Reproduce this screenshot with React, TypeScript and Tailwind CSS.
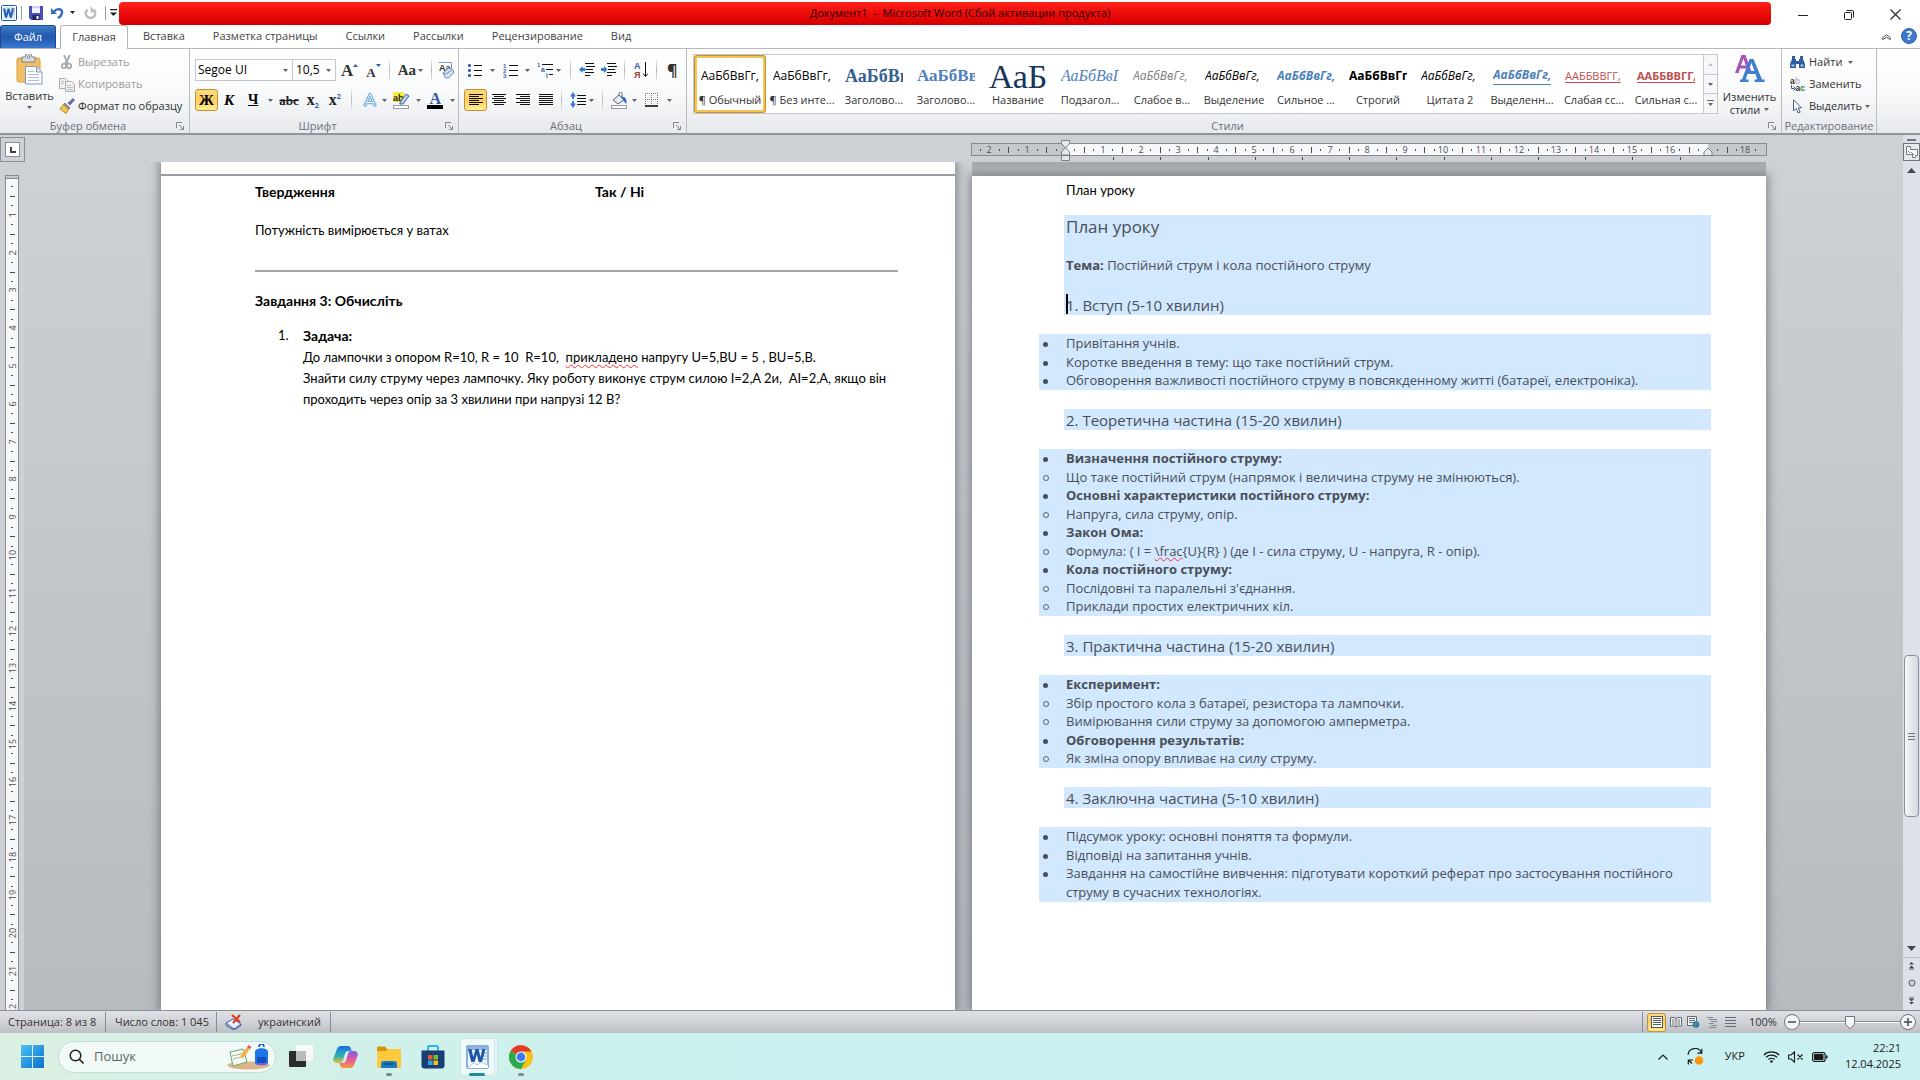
import React from "react";

const UI = "font-['Open_Sans','Noto_Sans',sans-serif]";

type P = { children?: React.ReactNode; className?: string };

function Svg({ w, h, children, vb }: { w: number; h: number; vb?: string; children: React.ReactNode }) {
  return (
    <svg width={w} height={h} viewBox={vb ?? `0 0 ${w} ${h}`} className="block shrink-0" aria-hidden="true">
      {children}
    </svg>
  );
}

const Arrow = ({ fill = "#5f6368" }: { fill?: string }) => (
  <Svg w={5} h={3}>
    <path d="M0 0h5L2.500 3z" fill={fill} />
  </Svg>
);

const WordIcon = ({ size = 16 }: { size?: number }) => (
  <Svg w={size} h={size} vb="0 0 16 16">
    <rect x="0.500" y="0.500" width="15" height="15" rx="1" fill="#fff" stroke="#1f58a8" />
    <rect x="2" y="2" width="12" height="12" fill="#dce9f8" />
    <path d="M10 3h4v1.200h-4zM10.500 6h3.500v1h-3.500zM11 8.500h3v1h-3z" fill="#9dbce4" />
    <path d="M2 3.500h2.200l1 5.300 1.400-5.300h1.900l1.300 5.300 1.100-5.300h2.100l-2.200 9.300H8.900L7.500 7.600 6 12.800H4z" fill="#1f5fb4" />
  </Svg>
);

/* Word 2010 window icon as shown on the taskbar: large W with a page curl */
const WordTile = () => (
  <Svg w={23} h={24}>
    <path d="M1 1h21v22H1z" fill="#f2f7fd" stroke="#2b66b5" />
    <path d="M2 2h20v3H2z" fill="#8db4e4" />
    <path d="M17 8h4M17 11h4M17 14h4" stroke="#7fa7d8" />
    <path d="M2 4h3.500l1.800 8 2.200-8h3l2 8 1.800-8h3.200l-3.500 13h-3.300l-1.900-7.500L8.500 17H5.200z" fill="#1d57a8" />
    <path d="M1 23l7-5 3 2 5-3 6 3v3z" fill="#fff" />
    <path d="M2 22l6-4 3 2 5-3 5 3" fill="none" stroke="#a9c3e6" />
  </Svg>
);

/* ---------- title bar ---------- */
function TitleBar() {
  return (
    <header className="flex h-[25px] shrink-0 items-center bg-white">
      <div className="flex w-[119px] shrink-0 items-center pl-px">
        <WordIcon />
        <span className="ml-1 h-3.5 w-px bg-[#9a9da1]" />
        <button aria-label="Сохранить" className="ml-[7px]">
          <Svg w={14} h={14}>
            <path d="M0 0h14v14H2L0 12z" fill="#4b4fb8" />
            <path d="M3 0h8v7H3z" fill="#eef1fb" />
            <path d="M3 0h8v2H3z" fill="#c8d2f2" />
            <path d="M3.500 9h7v5h-7z" fill="#23265e" />
            <path d="M7.500 10h2v3h-2z" fill="#fff" />
          </Svg>
        </button>
        <button aria-label="Отменить" className="ml-2 flex items-center gap-1.5">
          <Svg w={13} h={13}>
            <path d="M3 5.500C6 2 11.500 2.500 11 6.500c-.2 2.500-2 4.500-4 5.500" fill="none" stroke="#3568bf" strokeWidth="2.400" />
            <path d="M0 2v6h6z" fill="#3568bf" />
          </Svg>
          <Arrow fill="#222" />
        </button>
        <button aria-label="Повторить" className="ml-[9px]">
          <Svg w={13} h={14}>
            <path d="M3.500 3.500A4.800 4.800 0 1 0 9.500 3.500" fill="none" stroke="#bbbec2" strokeWidth="2.400" />
            <path d="M6.500 0v6.500h5z" fill="#bbbec2" />
          </Svg>
        </button>
        <span className="ml-2 h-3.5 w-px bg-[#9a9da1]" />
        <button aria-label="Настройка панели быстрого доступа" className="ml-1">
          <Svg w={7} h={7}>
            <path d="M0 0h7v1.200H0zM0 3.500h7L3.500 7z" fill="#222" />
          </Svg>
        </button>
      </div>
      <div className="mt-px flex h-[23px] flex-1 items-center justify-center rounded-sm bg-linear-to-b from-[#ff2018] via-[#ec0c0a] to-[#d60000] pl-[30px] text-[11px] text-[#2a0000]">
        <h1 className="whitespace-pre">Документ1  -  Microsoft Word (Сбой активации продукта)</h1>
      </div>
      <div className="ml-[9px] flex shrink-0 self-stretch pr-0.5 text-[#222]">
        <button aria-label="Свернуть" className="flex w-[46px] items-center justify-center pt-1">
          <Svg w={10} h={10}><path d="M0 5.500h10" stroke="currentColor" /></Svg>
        </button>
        <button aria-label="Восстановить" className="flex w-[46px] items-center justify-center pt-1">
          <Svg w={10} h={10}>
            <rect x="0.500" y="2.500" width="7" height="7" rx="1" fill="none" stroke="currentColor" />
            <path d="M2.500.5H8A1.500 1.500 0 0 1 9.500 2v5.500" fill="none" stroke="currentColor" />
          </Svg>
        </button>
        <button aria-label="Закрыть" className="flex w-[46px] items-center justify-center pt-1">
          <Svg w={11} h={11}><path d="M.5.5l10 10M10.500.5l-10 10" stroke="currentColor" strokeWidth="1.100" /></Svg>
        </button>
      </div>
    </header>
  );
}

/* ---------- tabs ---------- */
const TABS = ["Вставка", "Разметка страницы", "Ссылки", "Рассылки", "Рецензирование", "Вид"];

function Tabs() {
  return (
    <nav className="flex h-6 shrink-0 items-end border-b border-[#b4b8bd] bg-white text-[11px] text-[#444]">
      <button className="flex h-[23px] w-14 items-center justify-center rounded-t-[3px] border border-b-0 border-[#1d4a94] bg-linear-to-b from-[#3f7cc9] via-[#1f57ab] to-[#3a78d0] text-white">
        Файл
      </button>
      <button className="ml-1 -mb-px flex h-6 w-[68px] items-center justify-center rounded-t-[3px] border border-b-0 border-[#b4b8bd] bg-white">
        Главная
      </button>
      <div className="flex flex-1 pl-px">
        {TABS.map((t) => (
          <button key={t} className="flex h-[23px] items-center px-[14px]">{t}</button>
        ))}
      </div>
      <button aria-label="Свернуть ленту" className="mr-2.5 mb-[7px]">
        <Svg w={9} h={7}>
          <path d="M.7 3.500L4.500.7l3.800 2.800v2.200L4.500 3.200.7 5.700z" fill="#fff" stroke="#555" strokeWidth="1" />
        </Svg>
      </button>
      <button aria-label="Справка" className="mr-[3px] mb-1 flex size-4 items-center justify-center rounded-full border border-[#2b5fb0] bg-[#3f79cc] text-[12px] leading-none font-bold text-white">
        ?
      </button>
    </nav>
  );
}

/* ---------- ribbon ---------- */
function Group({ label, className = "", launcher = true, children }: { label: string; className?: string; launcher?: boolean; children: React.ReactNode }) {
  return (
    <section aria-label={label} className={`flex flex-col border-r border-[#b9bdc3] ${className}`}>
      <div className="min-h-0 flex-1">{children}</div>
      <div className="flex h-[15px] shrink-0 items-center text-[11px] leading-none text-[#6b6f7b]">
        <span className="flex-1 text-center whitespace-nowrap">{label}</span>
        {launcher && (
          <button aria-label={`${label}: параметры`} className="mr-[5px]">
            <Svg w={8} h={8}>
              <path d="M.5 6V.5H6M3 3l4 4M7.500 4v3.500H4" fill="none" stroke="#85898f" />
            </Svg>
          </button>
        )}
      </div>
    </section>
  );
}

const Sep = () => <span className="block h-5 w-px shrink-0 bg-linear-to-b from-[#e4e6e9] via-[#b5b9be] to-[#e4e6e9]" />;

function Tool({ label, children, drop, className = "" }: { label: string; children: React.ReactNode; drop?: boolean; className?: string }) {
  return (
    <button aria-label={label} className={`flex h-[22px] shrink-0 items-center gap-1 ${className}`}>
      {children}
      {drop && <Arrow />}
    </button>
  );
}

const ON = "justify-center rounded-[3px] border border-[#c2903c] bg-linear-to-b from-[#fddb7d] via-[#fccf5c] to-[#fdee90]";

const Lines = ({ rows }: { rows: [number, number][] }) => (
  <Svg w={14} h={12}>
    {rows.map(([x, w], i) => (
      <rect key={i} x={x} y={i * 2} width={w} height="1" fill="#111" />
    ))}
  </Svg>
);

function Clipboard() {
  return (
    <Group label="Буфер обмена" className="w-[190px] shrink-0">
      <div className="flex">
        <button className="flex w-[59px] shrink-0 flex-col items-center pt-[5px] text-[11px] leading-4 text-[#333]">
          <Svg w={27} h={31}>
            <rect x="1" y="4" width="23" height="24" rx="2" fill="#f0bf62" stroke="#d29a3a" />
            <path d="M6 3h3a3.500 3.500 0 0 1 7 0h3v5H6z" fill="#d9dde2" stroke="#7d838b" />
            <circle cx="12.500" cy="3" r="1.300" fill="#fff" stroke="#7d838b" />
            <path d="M9.500 12.500h11l5.500 5.500v12h-16.500z" fill="#fdfeff" stroke="#8597ba" />
            <path d="M20.500 12.500V18H26" fill="#dbe6f6" stroke="#8597ba" />
            <path d="M12 17.500h6M12 20.500h11M12 23.500h11M12 26.500h11" stroke="#a9bcdd" />
          </Svg>
          <span className="mt-[3px]">Вставить</span>
          <span className="mt-0.5"><Arrow /></span>
        </button>
        <div className="flex flex-col pt-0.5 text-[11px] whitespace-nowrap text-[#333]">
          <button className="flex h-[22px] items-center gap-[3px] text-[#9b9b9b]" disabled>
            <Svg w={16} h={16}>
              <path d="M5 1l4 9M11 1L6 10" stroke="#9ea1a5" strokeWidth="1.600" fill="none" />
              <circle cx="5" cy="12" r="2.200" fill="none" stroke="#9ea1a5" strokeWidth="1.600" />
              <circle cx="10" cy="12" r="2.200" fill="none" stroke="#9ea1a5" strokeWidth="1.600" />
            </Svg>
            Вырезать
          </button>
          <button className="flex h-[22px] items-center gap-[3px] text-[#9b9b9b]" disabled>
            <Svg w={16} h={16}>
              <path d="M.5 2.500h6l3 3v7h-9z" fill="#f2f2f3" stroke="#a9abae" />
              <path d="M6.500 5.500h6l3 3v7h-9z" fill="#f2f2f3" stroke="#a9abae" />
              <path d="M2 5.500h3M2 7.500h3M8 9.500h4M8 11.500h6M8 13.500h6" stroke="#b9bbbe" />
            </Svg>
            Копировать
          </button>
          <button className="flex h-[22px] items-center gap-[3px]">
            <Svg w={16} h={16}>
              <path d="M9 5l5-4.500 1.500 1.500L11 7z" fill="#6c6fb4" stroke="#45488a" strokeWidth=".6" />
              <path d="M6 5l5 5-1.500 1.500-5-5z" fill="#8f93a0" stroke="#5c606c" strokeWidth=".6" />
              <path d="M4.500 6.500l5 5L7 15.500 1 11z" fill="#f2c84e" stroke="#a37b1d" strokeWidth=".8" />
            </Svg>
            Формат по образцу
          </button>
        </div>
      </div>
    </Group>
  );
}

const SERIF = "font-['Liberation_Serif',serif]";

function FontGroup() {
  return (
    <Group label="Шрифт" className="w-[269px] shrink-0">
      <div className="flex h-[33px] items-center pt-[9px] pl-[5px]">
        <label className="relative flex h-[22px] w-[98px] shrink-0 items-center border border-[#c3c6ca] bg-white">
          <input aria-label="Шрифт" defaultValue="Segoe UI" className="w-full bg-transparent pl-0.5 text-[12px] text-black outline-none" />
          <span className="absolute right-1"><Arrow /></span>
        </label>
        <label className="relative -ml-px flex h-[22px] w-11 shrink-0 items-center border border-[#c3c6ca] bg-white">
          <input aria-label="Размер шрифта" defaultValue="10,5" className="w-full bg-transparent pl-[3px] text-[12px] text-black outline-none" />
          <span className="absolute right-1"><Arrow /></span>
        </label>
        <Tool label="Увеличить размер" className="ml-[5px]">
          <span className={`${SERIF} text-[17px] leading-none font-bold text-[#333]`}>A</span>
          <span className="-ml-1 mb-2.5"><Svg w={5} h={3}><path d="M0 3h5L2.500 0z" fill="#2c5aa8" /></Svg></span>
        </Tool>
        <Tool label="Уменьшить размер" className="ml-2">
          <span className={`${SERIF} mt-1 text-[13px] leading-none font-bold text-[#333]`}>A</span>
          <span className="-ml-1 mb-2.5"><Arrow fill="#2c5aa8" /></span>
        </Tool>
        <span className="ml-2"><Sep /></span>
        <Tool label="Регистр" drop className="ml-2 !gap-0.5">
          <span className={`${SERIF} text-[15px] leading-none font-bold text-[#333]`}>Aa</span>
        </Tool>
        <span className="ml-2"><Sep /></span>
        <Tool label="Очистить формат" className="ml-1.5">
          <Svg w={16} h={17}>
            <text x="1" y="9" fontSize="9" fontWeight="700" fontFamily="Liberation Sans" fill="#333">Aa</text>
            <path d="M.5.500h13v7" fill="none" stroke="#7f9cc9" />
            <path d="M5 11l5-4.500h3.500L15.500 9v2L10.500 16H7.500z" fill="#d7e3f5" stroke="#6d8abb" />
            <path d="M5 11l3 1 6.500-4.500" fill="none" stroke="#6d8abb" />
          </Svg>
        </Tool>
      </div>
      <div className="flex h-[29px] items-center pt-[7px] pl-[5px]">
        <Tool label="Полужирный" className={`w-[23px] ${ON}`}>
          <span className={`${SERIF} text-[15px] leading-none font-bold text-black`}>Ж</span>
        </Tool>
        <Tool label="Курсив" className="ml-0.5 w-[18px] justify-center">
          <span className={`${SERIF} text-[15px] leading-none font-bold text-black italic`}>К</span>
        </Tool>
        <Tool label="Подчеркнутый" drop className="ml-1.5 !gap-2.5 pl-1">
          <span className={`${SERIF} text-[14px] leading-none font-bold text-black underline`}>Ч</span>
        </Tool>
        <Tool label="Зачеркнутый" className="ml-1.5">
          <span className={`${SERIF} text-[13px] leading-none font-bold text-[#222] line-through`}>abc</span>
        </Tool>
        <Tool label="Подстрочный" className="ml-2 !gap-0">
          <span className={`${SERIF} text-[16px] leading-none font-bold text-[#222]`}>x</span>
          <span className="mt-2.5 text-[7px] leading-none font-bold text-[#2c5aa8]">2</span>
        </Tool>
        <Tool label="Надстрочный" className="ml-2.5 !gap-0">
          <span className={`${SERIF} text-[16px] leading-none font-bold text-[#222]`}>x</span>
          <span className="mb-2 text-[7px] leading-none font-bold text-[#2c5aa8]">2</span>
        </Tool>
        <span className="ml-2.5"><Sep /></span>
        <Tool label="Текстовые эффекты" drop className="ml-2.5">
          <Svg w={16} h={17}>
            <path d="M2.500 14.500L8 2.500l5.500 12M4.500 10.500h7" fill="none" stroke="#b5d9f6" strokeWidth="4" strokeLinejoin="round" />
            <path d="M2.500 14.500L8 2.500l5.500 12M4.500 10.500h7" fill="none" stroke="#4f93d2" strokeWidth="2.200" strokeLinejoin="round" />
            <path d="M2.500 14.500L8 2.500l5.500 12M4.500 10.500h7" fill="none" stroke="#fff" strokeWidth="1" />
          </Svg>
        </Tool>
        <Tool label="Цвет выделения" drop className="ml-1.5 !gap-1.5">
          <Svg w={17} h={17}>
            <rect x="0" y="0" width="11" height="10" fill="#f2ee3a" />
            <text x="0" y="8.500" fontSize="9" fontWeight="700" fontFamily="Liberation Sans" fill="#222">ab</text>
            <path d="M7 10l6-8 3 2-6 8H7z" fill="#b9cdec" stroke="#41609a" />
            <rect x="0.500" y="13.500" width="15" height="3" fill="#fff" stroke="#999da3" />
          </Svg>
        </Tool>
        <Tool label="Цвет текста" drop className="ml-1.5 !gap-1.5">
          <Svg w={17} h={17}>
            <text x="2.500" y="11.500" fontSize="16" fontWeight="700" fontFamily="Liberation Serif" fill="#33569e">A</text>
            <rect x="0" y="13" width="16" height="4" fill="#000" />
          </Svg>
        </Tool>
      </div>
    </Group>
  );
}

function Paragraph() {
  const rows = [0, 1, 2];
  return (
    <Group label="Абзац" className="w-[228px] shrink-0">
      <div className="flex h-[33px] items-center pt-[9px] pl-[9px]">
        <Tool label="Маркеры" drop className="!gap-[7px]">
          <Svg w={15} h={14}>
            {rows.map((r) => <g key={r}><rect x="0" y={r * 5 + 1} width="3" height="3" rx="1" fill="#3d62ae" /><rect x="6" y={r * 5 + 2} width="8" height="1" fill="#111" /></g>)}
          </Svg>
        </Tool>
        <Tool label="Нумерация" drop className="ml-2 !gap-[7px]">
          <Svg w={15} h={15}>
            {rows.map((r) => <g key={r}><text x="0" y={r * 5 + 5} fontSize="6" fontWeight="700" fontFamily="Liberation Sans" fill="#3d62ae">{r + 1}</text><rect x="6" y={r * 5 + 2} width="9" height="1" fill="#111" /></g>)}
          </Svg>
        </Tool>
        <Tool label="Многоуровневый список" drop className="ml-[7px] !gap-0.5">
          <Svg w={17} h={16}>
            <text x="0" y="5" fontSize="6" fontWeight="700" fontFamily="Liberation Sans" fill="#3d62ae">1</text>
            <text x="4" y="10" fontSize="7" fontWeight="700" fontFamily="Liberation Sans" fill="#3d62ae">a</text>
            <text x="9" y="16" fontSize="7" fontWeight="700" fontFamily="Liberation Sans" fill="#3d62ae">i</text>
            <path d="M5 2.500h11M9 7.500h7M12 12.500h4" stroke="#111" />
          </Svg>
        </Tool>
        <span className="ml-[9px]"><Sep /></span>
        {["Уменьшить отступ", "Увеличить отступ"].map((l, i) => (
          <Tool key={l} label={l} className={i ? "ml-1.5" : "ml-2"}>
            <Svg w={16} h={14}>
              <path d="M6 .5h9M7 3.500h9M7 6.500h7M6 9.500h9M6 12.500h5" stroke="#111" />
              <path d={i ? "M0 5h3V3l3.500 3.500L3 10V8H0z" : "M6.500 5h-3V3L0 6.500 3.500 10V8h3z"} fill="#3d7ad0" />
            </Svg>
          </Tool>
        ))}
        <span className="ml-[7px]"><Sep /></span>
        <Tool label="Сортировка" className="ml-[9px]">
          <Svg w={14} h={16}>
            <text x="0" y="7" fontSize="9" fontWeight="700" fontFamily="Liberation Sans" fill="#33569e">А</text>
            <text x="0" y="15.500" fontSize="9" fontWeight="700" fontFamily="Liberation Sans" fill="#a23b3b">Я</text>
            <path d="M11.500 0v14M9 11.500l2.500 3 2.500-3" stroke="#111" fill="none" />
          </Svg>
        </Tool>
        <span className="ml-2"><Sep /></span>
        <Tool label="Отобразить все знаки" className="ml-2.5">
          <span className="text-[16px] leading-none font-bold text-[#333]">¶</span>
        </Tool>
      </div>
      <div className="flex h-[29px] items-center pt-[7px] pl-[5px]">
        <Tool label="По левому краю" className={`w-[23px] ${ON}`}>
          <Lines rows={[[0, 14], [0, 10], [0, 14], [0, 10], [0, 14], [0, 10]]} />
        </Tool>
        <Tool label="По центру" className="ml-[5px]"><Lines rows={[[0, 14], [2, 10], [0, 14], [2, 10], [0, 14], [2, 10]]} /></Tool>
        <Tool label="По правому краю" className="ml-2.5"><Lines rows={[[0, 14], [4, 10], [0, 14], [4, 10], [0, 14], [4, 10]]} /></Tool>
        <Tool label="По ширине" className="ml-[9px]"><Lines rows={[[0, 14], [0, 14], [0, 14], [0, 14], [0, 14], [0, 14]]} /></Tool>
        <span className="ml-2"><Sep /></span>
        <Tool label="Интервал" drop className="ml-2 !gap-[3px]">
          <Svg w={16} h={16}>
            <path d="M3 0l3 4.500H4v2.500H2V4.500H0zM3 16l3-4.500H4V9H2v2.500H0z" fill="#3d7ad0" />
            <path d="M7 3.500h9M7 6.500h9M7 9.500h9M7 12.500h9" stroke="#111" />
          </Svg>
        </Tool>
        <span className="ml-2"><Sep /></span>
        <Tool label="Заливка" drop className="ml-2 !gap-1">
          <Svg w={17} h={17}>
            <path d="M2 8l6-5 5 5-6 4z" fill="#e8ecf2" stroke="#5d6470" />
            <path d="M8 3V1.500a1.500 1.500 0 0 1 3 0V6" fill="none" stroke="#5d6470" />
            <path d="M10 5c4-1 6 2 5.500 6.500C13 11 14 9 12 8z" fill="#2f6fc6" />
            <rect x="0.500" y="13.500" width="15" height="3" fill="#fff" stroke="#999da3" />
          </Svg>
        </Tool>
        <Tool label="Границы" drop className="ml-2 !gap-2">
          <Svg w={14} h={14}>
            <path d="M.5 0v13M6.500 0v13M12.500 0v13M0 .5h13M0 6.500h13" stroke="#777b82" strokeDasharray="1 1" fill="none" />
            <path d="M0 13h13" stroke="#111" strokeWidth="1.600" />
          </Svg>
        </Tool>
      </div>
    </Group>
  );
}

const STYLES: [string, string][] = [
  ["¶ Обычный", "text-[12px] text-black"],
  ["¶ Без инте...", "text-[12px] text-black"],
  ["Заголово...", "font-['Liberation_Serif',serif] text-[18px] font-bold text-[#365f91]"],
  ["Заголово...", "font-['Liberation_Serif',serif] text-[17px] font-bold text-[#4f81bd]"],
  ["Название", "font-['Liberation_Serif',serif] text-[34px] text-[#17365d]"],
  ["Подзагол...", "font-['Liberation_Serif',serif] text-[16px] italic text-[#4f81bd]"],
  ["Слабое в...", "text-[12px] italic text-[#808080]"],
  ["Выделение", "text-[12px] italic text-black"],
  ["Сильное ...", "text-[12px] font-bold italic text-[#4f81bd]"],
  ["Строгий", "text-[12px] font-bold text-black"],
  ["Цитата 2", "text-[12px] italic text-black"],
  ["Выделенн...", "text-[12px] font-bold italic text-[#4f81bd] border-b border-[#4f81bd]"],
  ["Слабая сс...", "text-[11px] text-[#c0504d] underline underline-offset-2"],
  ["Сильная с...", "text-[11px] font-bold text-[#c0504d] underline underline-offset-2"],
];

function StylesGroup() {
  return (
    <Group label="Стили" className="min-w-0 flex-1">
      <div className="flex h-full items-start pt-[5px] pl-1.5">
        <div className="flex h-[60px] min-w-0 flex-1 border border-[#c5c8cc] bg-white">
          <div className="flex min-w-0 flex-1 overflow-hidden">
            {STYLES.map(([name, cls], i) => {
              const sample = i === 4 ? "АаБ" : i >= 12 ? "ААББВВГГ," : "АаБбВвГг,";
              return (
                <button key={i} className={`flex w-[72px] shrink-0 flex-col items-center px-1 pt-px ${i === 0 ? "rounded-[3px] border-[3px] border-[#f3c653] !px-px !pt-0 !pb-0 outline outline-[#c2903c] -outline-offset-1" : "py-[3px]"}`}>
                  <span className={`flex h-[35px] w-[58px] overflow-hidden whitespace-nowrap ${i === 0 ? "-mt-0.5" : ""} items-end ${i === 4 ? "justify-center pb-[5px]" : "pb-1.5"}`}>
                    <span className={`block leading-[18px] ${cls}`}>{sample}</span>
                  </span>
                  <span className="text-[11px] leading-[17px] whitespace-nowrap text-[#333]">{name}</span>
                </button>
              );
            })}
          </div>
          <div className="flex w-3.5 shrink-0 flex-col border-l border-[#c5c8cc] bg-[#f6f7f8]">
            <button aria-label="Вверх" className="flex flex-1 items-center justify-center">
              <Svg w={5} h={3}><path d="M0 3h5L2.500 0z" fill="#b9bcc0" /></Svg>
            </button>
            <button aria-label="Вниз" className="flex flex-1 items-center justify-center border-y border-[#c5c8cc]"><Arrow /></button>
            <button aria-label="Дополнительные параметры" className="flex flex-1 items-center justify-center">
              <Svg w={7} h={7}><path d="M0 0h7v1H0zM1 3h5L3.500 6z" fill="#5f6368" /></Svg>
            </button>
          </div>
        </div>
        <button className="flex w-[63px] shrink-0 flex-col items-center text-[11px] leading-[13px] text-[#333]">
          <Svg w={30} h={30}>
            <path d="M0 19l6.500-18h4L17 19h-4l-1.300-4.500H5L3.700 19zM6 11.500h4.800L8.400 4.500z" fill="#a855b5" />
            <path d="M5 28v-2.500h2L14.500 5h4L27 25.500h2.500V28h-10v-2.500h2.700L20.500 20h-8l-1.800 5.500h2.800V28zM13.500 17h6L16.400 9z" fill="#3f7fd0" />
          </Svg>
          <span className="mt-1.5">Изменить</span>
          <span className="flex items-center gap-1">стили <Arrow /></span>
        </button>
      </div>
    </Group>
  );
}

function Editing() {
  return (
    <Group label="Редактирование" launcher={false} className="w-[95px] shrink-0">
      <div className="flex flex-col pt-0.5 pl-2 text-[11px] text-[#333]">
        <button className="flex h-[22px] items-center gap-1">
          <Svg w={15} h={14}>
            <path d="M2 1h3v3h1v2h3V4h1V1h3v3l2 5v4h-6V9H6v4H0V9l2-5z" fill="#2f5c9e" />
            <path d="M1.500 9.500h3v2h-3zM10.500 9.500h3v2h-3z" fill="#a9c6ea" />
          </Svg>
          <span className="mr-0.5">Найти</span> <Arrow />
        </button>
        <button className="flex h-[22px] items-center gap-[3px]">
          <Svg w={16} h={15}>
            <text x="0" y="6.500" fontSize="8.500" fontWeight="700" fontFamily="Liberation Sans" fill="#333">a<tspan fill="#bbb">b</tspan></text>
            <text x="5.500" y="14" fontSize="8.500" fontWeight="700" fontFamily="Liberation Sans" fill="#333">a<tspan fill="#1f8a2f">c</tspan></text>
            <path d="M1.500 8v3.500h3M3.500 9.500l2 2-2 2" fill="none" stroke="#33569e" />
          </Svg>
          Заменить
        </button>
        <button className="flex h-[22px] items-center gap-[7px] pl-[3px]">
          <Svg w={9} h={15}>
            <path d="M.5.800v11l2.700-2.400 1.900 4.600 2-.9-1.900-4.300H8.500z" fill="#fff" stroke="#4a5f8c" />
          </Svg>
          <span className="-mr-1">Выделить</span> <Arrow />
        </button>
      </div>
    </Group>
  );
}

/* ---------- rulers ---------- */
const CM = 37.8;

function HRuler() {
  const zero = 94;
  const marks: React.ReactNode[] = [];
  for (let q = -9; q <= 74; q++) {
    const x = Math.round(zero + (q * CM) / 4);
    if (q === 0 || q === 68 || x > 792) continue;
    if (q % 4 === 0) {
      marks.push(<text key={q} x={x} y="10" textAnchor="middle" fontSize="9" fontFamily="Open Sans" fill="#4a4d52">{Math.abs(q / 4)}</text>);
    } else if (q % 2 === 0) {
      marks.push(<rect key={q} x={x} y="4" width="1" height="6" fill="#4a4d52" />);
    } else {
      marks.push(<rect key={q} x={x} y="6" width="1" height="2" fill="#4a4d52" />);
    }
  }
  return (
    <svg width="796" height="22" viewBox="0 -3 796 22" className="-ml-px block overflow-visible" aria-label="Горизонтальная линейка">
      <rect x="0.500" y="0.500" width="795" height="12" fill="#c5c9cd" stroke="#868a91" />
      <rect x="95" y="1" width="642" height="11" fill="#f7f8f9" />
      {marks}
      {Array.from({ length: 13 }, (_, i) => (
        <rect key={i} x={Math.round(95 + (i + 1) * 47.2)} y="14" width="1" height="3" fill="#4a4d52" />
      ))}
      <g fill="#e8e9eb" stroke="#7d8187">
        <path d="M90.500-2.500h8v3l-4 4.500-4-4.500z" />
        <path d="M94.500 4.500l4 4.500v3h-8v-3zM90.500 12.500h8v5h-8z" />
        <path d="M737 5l4 4v3.500h-8V9z" />
      </g>
    </svg>
  );
}

function VRuler() {
  const marks: React.ReactNode[] = [];
  for (let q = 1; q <= 96; q++) {
    const y = Math.round(2 + (q * CM) / 4);
    if (q % 4 === 0) {
      marks.push(
        <text key={q} transform={`translate(10.500 ${y}) rotate(-90)`} textAnchor="middle" fontSize="9" fontFamily="Open Sans" fill="#4a4d52">{q / 4}</text>
      );
    } else if (q % 2 === 0) {
      marks.push(<rect key={q} x="5" y={y} width="5" height="1" fill="#4a4d52" />);
    } else {
      marks.push(<rect key={q} x="6" y={y} width="2" height="1" fill="#4a4d52" />);
    }
  }
  return (
    <div className="h-full w-6 shrink-0 overflow-hidden bg-[#cdd1d6] pt-[13px] pl-[5px]">
      <svg width="14" height="960" className="block" aria-label="Вертикальная линейка">
        <rect x="0.500" y="0.500" width="13" height="970" fill="#f7f8f9" stroke="#868a91" />
        <path d="M1 1h12v2H1z" fill="#c5c9cd" />
        <path d="M0 3.500h14" stroke="#868a91" />
        {marks}
      </svg>
    </div>
  );
}

/* ---------- document ---------- */
const BODY = "font-['Lato','Open_Sans',sans-serif]";

function LeftPage() {
  return (
    <article className="flex w-[794px] shrink-0 flex-col bg-white shadow-[0_0_9px_2px_rgba(80,86,94,0.6)]">
      <div className="h-3 shrink-0 bg-white" />
      <div className="h-0.5 shrink-0 bg-[#9a9ea6]" />
      <div className={`${BODY} pr-[57px] pl-[94px] text-[13px] text-black`}>
        <table className="mt-1.5 w-full table-fixed text-left leading-5">
          <thead>
            <tr>
              <th scope="col" className="w-[340px] text-[14px] font-bold">Твердження</th>
              <th scope="col" className="text-[14px] font-bold">Так / Ні</th>
            </tr>
          </thead>
          <tbody>
            <tr><td colSpan={2} className="pt-[18px]">Потужність вимірюється у ватах</td></tr>
          </tbody>
        </table>
        <hr className="mt-[30px] border-t-2 border-[#a5a5a5]" />
        <h2 className="mt-[19px] text-[14px] leading-5 font-bold">Завдання 3: Обчисліть</h2>
        <ol className="mt-3.5">
          <li className="flex leading-[21px]">
            <span className="w-12 shrink-0 pl-[23px]">1.</span>
            <p>
              <b className="text-[14px]">Задача:</b><br />
              До лампочки з опором R=10, R = 10&nbsp; R=10,&nbsp;{" "}
              <span className="underline decoration-red-500 decoration-wavy decoration-1 underline-offset-2">прикладено</span>{" "}
              напругу U=5,BU = 5 , BU=5,B.<br />
              Знайти силу струму через лампочку. Яку роботу виконує струм силою I=2,A 2и,&nbsp; AI=2,A, якщо він проходить через опір за 3 хвилини при напрузі 12 В?
            </p>
          </li>
        </ol>
      </div>
    </article>
  );
}

const SEL = "bg-[#d1e8ff] text-[#4a4f57]";

type Item = { t: React.ReactNode; kind?: "b" | "o" };

function SelList({ items }: { items: Item[] }) {
  return (
    <ul className={`${SEL} -ml-[25px] pl-[25px]`}>
      {items.map(({ t, kind }, i) => (
        <li key={i} className={`relative pl-0.5 ${i % 2 ? "leading-[18px]" : "leading-[19px]"} ${kind === "b" ? "font-bold" : ""}`}>
          {kind === "o" ? (
            <span className="absolute top-[7px] -left-[21px] size-[6px] rounded-full border border-[#5c6168]" />
          ) : (
            <span className="absolute top-[8px] -left-[21px] size-[5px] rounded-full bg-[#4a4f57]" />
          )}
          {t}
        </li>
      ))}
    </ul>
  );
}

const SelHeading = ({ children }: P) => <h3 className={`${SEL} pt-px pl-0.5 text-[15px] leading-5`}>{children}</h3>;

function RightPage() {
  return (
    <div className="flex w-[794px] shrink-0 flex-col">
      <div className="h-3.5 shrink-0 bg-linear-to-b from-[#a4a8ad] to-[#b6b9be]" />
      <article className={`flex-1 bg-white pt-1 pr-[55px] pl-[92px] shadow-[0_0_9px_2px_rgba(80,86,94,0.6)] ${UI} text-[13px]`}>
        <p className={`${BODY} pl-0.5 leading-5 text-black`}>План уроку</p>
        <div className="mt-[15px] flex flex-col gap-[19px]">
          <div className={`${SEL} pl-0.5`}>
            <h2 className="text-[17px] leading-6">План уроку</h2>
            <p className="mt-[17px] leading-[19px]"><b>Тема:</b> Постійний струм і кола постійного струму</p>
            <h3 className="relative mt-[19px] pt-px text-[15px] leading-5">
              <span className="absolute top-0 left-0 h-5 w-0.5 bg-black" />1. Вступ (5-10 хвилин)
            </h3>
          </div>
          <SelList items={[
            { t: "Привітання учнів." },
            { t: "Коротке введення в тему: що таке постійний струм." },
            { t: "Обговорення важливості постійного струму в повсякденному житті (батареї, електроніка)." },
          ]} />
          <SelHeading>2. Теоретична частина (15-20 хвилин)</SelHeading>
          <SelList items={[
            { t: "Визначення постійного струму:", kind: "b" },
            { t: "Що таке постійний струм (напрямок і величина струму не змінюються).", kind: "o" },
            { t: "Основні характеристики постійного струму:", kind: "b" },
            { t: "Напруга, сила струму, опір.", kind: "o" },
            { t: "Закон Ома:", kind: "b" },
            { t: <>Формула: ( I = <span className="underline decoration-red-500 decoration-wavy decoration-1 underline-offset-1">\frac</span>{"{U}{R}"} ) (де I - сила струму, U - напруга, R - опір).</>, kind: "o" },
            { t: "Кола постійного струму:", kind: "b" },
            { t: "Послідовні та паралельні з'єднання.", kind: "o" },
            { t: "Приклади простих електричних кіл.", kind: "o" },
          ]} />
          <SelHeading>3. Практична частина (15-20 хвилин)</SelHeading>
          <SelList items={[
            { t: "Експеримент:", kind: "b" },
            { t: "Збір простого кола з батареї, резистора та лампочки.", kind: "o" },
            { t: "Вимірювання сили струму за допомогою амперметра.", kind: "o" },
            { t: "Обговорення результатів:", kind: "b" },
            { t: "Як зміна опору впливає на силу струму.", kind: "o" },
          ]} />
          <SelHeading>4. Заключна частина (5-10 хвилин)</SelHeading>
          <SelList items={[
            { t: "Підсумок уроку: основні поняття та формули." },
            { t: "Відповіді на запитання учнів." },
            { t: "Завдання на самостійне вивчення: підготувати короткий реферат про застосування постійного струму в сучасних технологіях." },
          ]} />
        </div>
      </article>
    </div>
  );
}

function Scrollbar() {
  return (
    <div className="flex w-[17px] shrink-0 flex-col items-center bg-[#dde1e9]">
      <button aria-label="Прокрутить вверх" className="flex h-4 items-center"><Svg w={9} h={5}><path d="M0 5h9L4.500 0z" fill="#44484e" /></Svg></button>
      <div className="flex-[480]" />
      <div className="flex w-[15px] flex-[160] flex-col items-center justify-center gap-0.5 rounded-sm border border-[#8d929a] bg-linear-to-r from-[#f6f7f8] to-[#d4d8dd]">
        {[0, 1, 2].map((i) => <span key={i} className="h-px w-[7px] bg-[#6f747b]" />)}
      </div>
      <div className="flex-[125]" />
      <button aria-label="Прокрутить вниз" className="flex h-4 items-center"><Svg w={9} h={5}><path d="M0 0h9L4.500 5z" fill="#44484e" /></Svg></button>
      <div className="flex w-full flex-col items-center border-t border-[#b9bec7]">
        <button aria-label="Предыдущая страница" className="flex h-4 items-center"><Svg w={7} h={8}><path d="M3.500 0L6 2.500H1zM3.500 3.500L6 6H1zM1 6.500h5v1H1z" fill="#44484e" /></Svg></button>
        <button aria-label="Выбор объекта перехода" className="flex h-[18px] items-center"><Svg w={8} h={8}><circle cx="4" cy="4" r="3" fill="#d3d6da" stroke="#555a61" /></Svg></button>
        <button aria-label="Следующая страница" className="flex h-[18px] items-center"><Svg w={7} h={8}><path d="M1 .5h5v1H1zM1 2h5L3.500 4.500zM1 5h5L3.500 7.500z" fill="#44484e" /></Svg></button>
      </div>
    </div>
  );
}

/* ---------- status bar ---------- */
function StatusBar() {
  const cell = "flex h-5 shrink-0 items-center border-r border-[#888c93]";
  return (
    <footer className="flex h-[23px] shrink-0 items-center border-t border-[#8b8f97] bg-linear-to-b from-[#dfe1e5] via-[#cfd2d6] to-[#bcc0c5] text-[11px] text-[#333]">
      <span className={`${cell} w-[106px] pl-2 whitespace-nowrap`}>Страница: 8 из 8</span>
      <span className={`${cell} w-[111px] pl-[9px] whitespace-nowrap`}>Число слов: 1 045</span>
      <span className={`${cell} w-[114px] gap-4 pl-2`}>
        <Svg w={17} h={16}>
          <path d="M1 9l7-4 8 5-7 5z" fill="#eaf0fa" stroke="#3d62ae" />
          <path d="M1 9v2.500L9 16l7-4.500V10" fill="none" stroke="#3d62ae" />
          <path d="M7 1l8 7M15 1L8 9" stroke="#e2391b" strokeWidth="2" />
        </Svg>
        украинский
      </span>
      <span className="flex-1" />
      <span className="h-5 w-px bg-[#888c93]" />
      <button aria-label="Разметка страницы" className={`ml-1 flex h-[19px] w-[19px] items-center ${ON}`}>
        <Svg w={12} h={12}><rect x=".5" y=".5" width="11" height="11" fill="#fff" stroke="#555a61" /><path d="M2 2.500h8M2 4.500h8M2 6.500h8M2 8.500h8" stroke="#555a61" /></Svg>
      </button>
      <button aria-label="Режим чтения" className="ml-1">
        <Svg w={12} h={12}><path d="M.5 1.500h3.500l2 1 2-1h3.500v8.500H8l-2 1-2-1H.5zM6 2.500V11" fill="#f4f5f6" stroke="#666b72" /><path d="M2 4h2.500M2 6h2.500M2 8h2.500M7.500 4H10M7.500 6H10M7.500 8H10" stroke="#666b72" /></Svg>
      </button>
      <button aria-label="Веб-документ" className="ml-[5px]">
        <Svg w={13} h={12}><path d="M.5.500h9v9h-9z" fill="#f4f5f6" stroke="#666b72" /><path d="M2 2.500h6M2 4.500h6M2 6.500h4" stroke="#666b72" /><circle cx="9" cy="8.500" r="3.300" fill="#2f6fc6" /><path d="M7 8c1-2 2.500-1 3.500-1.500 0 1.500-1 3-2 4-.5-1-1-1.500-1.500-2.500z" fill="#46a84e" /></Svg>
      </button>
      <button aria-label="Структура" className="ml-1.5">
        <Svg w={12} h={12}><path d="M1 1.500h6M3 3.500h8M5 5.500h6M3 7.500h5M5 9.500h6M3 11.500h7" stroke="#85898f" /></Svg>
      </button>
      <button aria-label="Черновик" className="ml-[7px]">
        <Svg w={11} h={12}><path d="M0 1.500h11M0 4.500h11M0 7.500h11M0 10.500h11" stroke="#666b72" /></Svg>
      </button>
      <span className="ml-[13px] w-[35px]">100%</span>
      <button aria-label="Уменьшить масштаб" className="flex size-4 items-center justify-center rounded-full border border-[#6f747b] bg-[#f3f4f5]">
        <Svg w={8} h={8}><path d="M0 4h8" stroke="#44484e" strokeWidth="1.500" /></Svg>
      </button>
      <span className="relative flex w-[100px] items-center">
        <span className="h-0.5 w-full border-t border-[#878b92] bg-white" />
        <input type="range" aria-label="Масштаб" min={10} max={190} defaultValue={100} className="absolute inset-0 w-full opacity-0" />
        <span className="pointer-events-none absolute left-[45px]">
          <Svg w={10} h={13}><path d="M.5.500h9v8L5 12.500.5 8.500z" fill="#f6f7f8" stroke="#6f747b" /></Svg>
        </span>
      </span>
      <button aria-label="Увеличить масштаб" className="mr-1 flex size-4 items-center justify-center rounded-full border border-[#6f747b] bg-[#f3f4f5]">
        <Svg w={8} h={8}><path d="M0 4h8M4 0v8" stroke="#44484e" strokeWidth="1.500" /></Svg>
      </button>
    </footer>
  );
}

/* ---------- taskbar ---------- */
function TaskApp({ label, dot, children, className = "w-11" }: { label: string; dot?: boolean; children: React.ReactNode; className?: string }) {
  return (
    <button aria-label={label} className={`relative flex h-[38px] shrink-0 items-center justify-center ${className}`}>
      {children}
      {dot && <span className="absolute bottom-0 h-[3px] w-1.5 rounded-full bg-[#7b8a8c]" />}
    </button>
  );
}

function Taskbar() {
  return (
    <div className="flex h-[47px] shrink-0 items-center bg-linear-to-r from-[#dbf0e2] via-[#cdf1ef] via-30% to-[#cbf0f2]">
      <button aria-label="Пуск" className="ml-[21px]">
        <Svg w={23} h={23}>
          <defs>
            <linearGradient id="win" x1="0" y1="0" x2="1" y2="1"><stop offset="0" stopColor="#4cc2f1" /><stop offset="1" stopColor="#0a6fd0" /></linearGradient>
          </defs>
          <path d="M0 0h11v11H0zM12 0h11v11H12zM0 12h11v11H0zM12 12h11v11H12z" fill="url(#win)" />
        </Svg>
      </button>
      <label className="ml-3.5 flex h-8 w-[218px] shrink-0 items-center overflow-hidden rounded-full border border-[#c4dedb] bg-[#f1faf8] pl-2.5">
        <Svg w={15} h={15}><circle cx="6.500" cy="6.500" r="5.300" fill="none" stroke="#222" strokeWidth="1.500" /><path d="M10.500 10.500l4 4" stroke="#222" strokeWidth="1.700" /></Svg>
        <input aria-label="Пошук" placeholder="Пошук" className="ml-2.5 w-0 min-w-0 flex-1 bg-transparent text-[13px] outline-none placeholder:text-[#5d6666]" />
        <span className="mr-[5px]">
          <Svg w={43} h={26}>
            <path d="M0 21c2-4 38-5 43 0-2 6-41 6-43 0z" fill="#dcb48a" />
            <path d="M3 8l13-3 4 13-14 4z" fill="#f5f7f4" stroke="#62ad6e" />
            <path d="M5 12l11-2.500M6 15l11-2.500" stroke="#a9b5aa" />
            <path d="M14 11l6-8 3 2-6 8-3.500 1z" fill="#f3b340" /><path d="M20 3l1.500-2 3 2L23 5z" fill="#e2546b" />
            <path d="M28 8c0-5 13-5 13 0v11c0 3-13 3-13 0z" fill="#1977e8" />
            <path d="M32 3c0-4 5-4 5 0" fill="none" stroke="#0d55b5" strokeWidth="1.500" />
            <path d="M30 13h9v6h-9z" fill="#0f4fc0" /><path d="M31 20h8" stroke="#b44be0" strokeWidth="1.500" />
          </Svg>
        </span>
      </label>
      <div className="ml-[3px] flex items-center">
        <TaskApp label="Представлення завдань">
          <Svg w={24} h={23}>
            <rect x="7" y="0" width="17" height="16" rx="1" fill="#f7f9f9" />
            <rect x="0" y="6" width="17" height="16" rx="1" fill="#2a2b2c" />
            <rect x="7" y="6" width="10" height="10" fill="#b9bcbc" />
          </Svg>
        </TaskApp>
        <TaskApp label="Copilot">
          <Svg w={25} h={24}>
            <defs>
              <linearGradient id="c1" x1="0" y1="0" x2="0" y2="1"><stop offset="0" stopColor="#1b6fe0" /><stop offset=".6" stopColor="#2fb3b0" /><stop offset="1" stopColor="#e6c22f" /></linearGradient>
              <linearGradient id="c2" x1="0" y1="0" x2="0" y2="1"><stop offset="0" stopColor="#7a5fe8" /><stop offset=".5" stopColor="#e5579f" /><stop offset="1" stopColor="#f59a3c" /></linearGradient>
            </defs>
            <path d="M8 1h7c1.500 0 2.500 1 3 3l.5 2H15c-1.500 0-2.500 1-3 2.500l-2 7c-.5 1.500-1.500 2.500-3 2.500H4c-3 0-4.500-2-3.500-5L4 4c.7-2 2-3 4-3z" fill="url(#c1)" />
            <path d="M17 23h-7c-1.500 0-2.500-1-3-3l-.5-2H10c1.500 0 2.500-1 3-2.500l2-7C15.500 7 16.500 6 18 6h3c3 0 4.500 2 3.500 5L21 20c-.7 2-2 3-4 3z" fill="url(#c2)" />
          </Svg>
        </TaskApp>
        <TaskApp label="Провідник" dot>
          <Svg w={24} h={22}>
            <path d="M0 2c0-1 .5-1.500 1.500-1.500H8L11 4v5H0z" fill="#d8940f" />
            <path d="M0 5h9l2-2h11.500c1 0 1.500.5 1.500 1.500v16c0 1-.5 1.500-1.500 1.500h-21C.5 22 0 21.500 0 20.500z" fill="#fcc93a" />
            <path d="M4 22v-4c0-2 1-3 3-3h10c2 0 3 1 3 3v4z" fill="#1a78c4" /><path d="M7 18h10" stroke="#0d4f8a" strokeWidth="1.500" />
          </Svg>
        </TaskApp>
        <TaskApp label="Microsoft Store">
          <Svg w={24} h={24}>
            <path d="M7 6V2.500C7 1.500 7.500 1 8.500 1h7c1 0 1.500.5 1.500 1.500V6" fill="none" stroke="#2bb4ec" strokeWidth="2" />
            <path d="M.5 5.500h23v15c0 2-1 3-3 3h-17c-2 0-3-1-3-3z" fill="#173f74" />
            <path d="M7 10h4.500v4.500H7z" fill="#f0542b" /><path d="M12.500 10H17v4.500h-4.500z" fill="#7fba2c" />
            <path d="M7 15.500h4.500V20H7z" fill="#2aa8ea" /><path d="M12.500 15.500H17V20h-4.500z" fill="#fdbb15" />
          </Svg>
        </TaskApp>
        <TaskApp label="Microsoft Word">
          <span className="flex h-[38px] w-[35px] items-center justify-center rounded border border-[#cfe4e4] bg-[#eefafa] shadow-[2px_0_0_#e4f6f6,3px_0_0_#cfe4e4]"><WordTile /></span>
          <span className="absolute bottom-0 h-[3px] w-4 rounded-full bg-[#1f8a9b]" />
        </TaskApp>
        <TaskApp label="Google Chrome" dot>
          <Svg w={24} h={24}>
            <circle cx="12" cy="12" r="12" fill="#fbc116" />
            <path d="M12 12L1.600 6A12 12 0 0 1 22.400 6.500H12z" fill="#e33b2e" />
            <path d="M12 12L1.600 6A12 12 0 0 0 12 24l5-9z" fill="#2da94f" />
            <circle cx="12" cy="12" r="5.500" fill="#fff" /><circle cx="12" cy="12" r="4.400" fill="#3a7cec" />
          </Svg>
        </TaskApp>
      </div>
      <div className="flex-1" />
      <div className="flex items-center text-[#1a1a1a]">
        <button aria-label="Приховані значки"><Svg w={10} h={6}><path d="M.5 5.500L5 1l4.500 4.500" fill="none" stroke="#1a1a1a" strokeWidth="1.200" /></Svg></button>
        <button aria-label="Оновлення" className="ml-[19px]">
          <Svg w={17} h={17}>
            <path d="M1 7a7 7 0 0 1 13.500-2M14.800.8v4.400h-4.400M5 15.500L1.500 12M6 12H1.300v4.500" fill="none" stroke="#1a1a1a" strokeWidth="1.200" />
            <circle cx="12" cy="12.500" r="4.300" fill="#fb9410" />
          </Svg>
        </button>
        <button className="ml-5 w-[22px] text-[11px]">УКР</button>
        <button aria-label="Мережа, звук, батарея" className="ml-[17px] flex items-center gap-2">
          <Svg w={17} h={13}>
            <path d="M.8 5a11 11 0 0 1 15.400 0M3 7.300a7.800 7.800 0 0 1 11 0M5.400 9.500a4.500 4.500 0 0 1 6.200 0" fill="none" stroke="#1a1a1a" strokeWidth="1.200" />
            <circle cx="8.500" cy="11.500" r="1.300" fill="#1a1a1a" />
          </Svg>
          <Svg w={16} h={12}>
            <path d="M.6 4h2.500L6.500.8v10.400L3.100 8H.6zM9.500 3.500l5 5M14.500 3.500l-5 5" fill="none" stroke="#1a1a1a" strokeWidth="1.100" />
          </Svg>
          <Svg w={16} h={10}>
            <rect x=".6" y=".6" width="12.500" height="8.800" rx="2" fill="none" stroke="#1a1a1a" strokeWidth="1.200" />
            <rect x="2" y="2" width="9.500" height="6" rx="1" fill="#1a1a1a" /><path d="M14.800 3.500v3" stroke="#1a1a1a" strokeWidth="1.500" />
          </Svg>
        </button>
        <div className="mr-[19px] mb-0.5 ml-[17px] text-right text-[11px] leading-4">
          <div>22:21</div>
          <div>12.04.2025</div>
        </div>
      </div>
    </div>
  );
}

export default function App() {
  return (
    <div className={`flex h-screen flex-col overflow-hidden ${UI}`}>
      <TitleBar />
      <Tabs />
      <div className="flex h-[86px] shrink-0 border-b-2 border-[#90959d] bg-linear-to-b from-white via-[#f9fafb] to-[#e6e9ed]">
        <Clipboard />
        <FontGroup />
        <Paragraph />
        <StylesGroup />
        <Editing />
        <div className="w-[43px] shrink-0" />
      </div>
      <div className="flex h-[27px] shrink-0 bg-[#cdd1d5]">
        <div className="w-6 shrink-0 pt-0.5">
          <button aria-label="Тип табуляции" className="flex size-[25px] items-center justify-center border border-[#8b8f97] bg-[#cdd1d5]">
            <span className="flex size-[15px] items-center justify-center border border-[#8b8f97] bg-white">
              <Svg w={6} h={6}><path d="M0 0h2v4h4v2H0z" fill="#444" /></Svg>
            </span>
          </button>
        </div>
        <div className="flex flex-1 justify-center gap-[17px] overflow-hidden">
          <div className="w-[794px] shrink-0" />
          <div className="w-[794px] shrink-0 pt-[5px]"><HRuler /></div>
        </div>
        <div className="flex w-[17px] shrink-0 flex-col items-center gap-0.5 bg-[#dde1e9] pt-1">
          <span className="h-0.5 w-[9px] bg-[#6f747b]" />
          <button aria-label="Линейка" className="flex h-[18px] w-[17px] items-center justify-center border border-[#6f747b] bg-[#e6e8ec]">
            <Svg w={12} h={12}><path d="M.5.500h4v3h7v6h-2v2h-3v-3h-6z" fill="#f7f8f9" stroke="#777b82" /><path d="M2 5l2 2M5 6l3 3" stroke="#777b82" /></Svg>
          </button>
        </div>
      </div>
      <div className="flex min-h-0 flex-1 bg-linear-to-b from-[#cdd0d4] to-[#b7babf]">
        <VRuler />
        <main className="flex min-w-0 flex-1 justify-center gap-[17px] overflow-hidden">
          <LeftPage />
          <RightPage />
        </main>
        <Scrollbar />
      </div>
      <StatusBar />
      <Taskbar />
    </div>
  );
}
